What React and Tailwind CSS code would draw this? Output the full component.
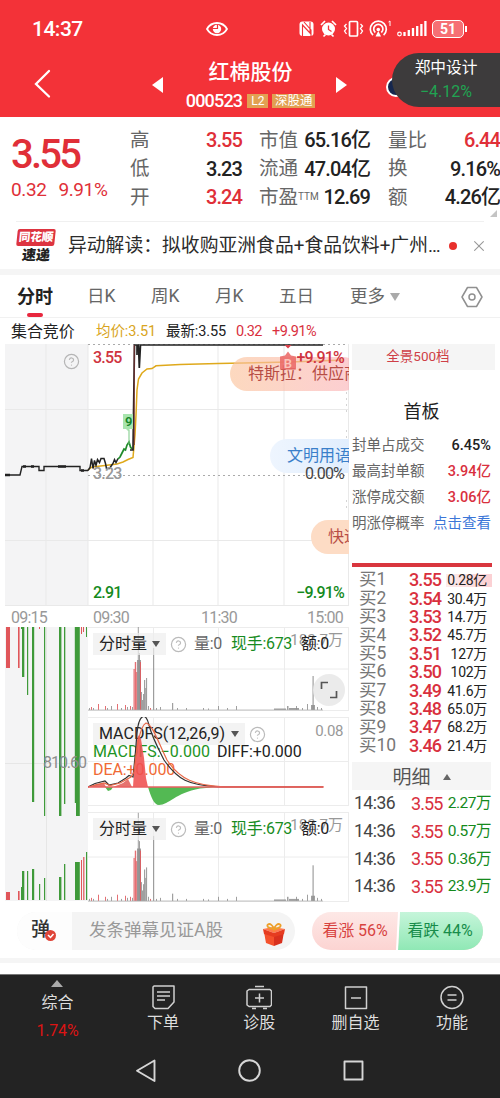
import { X, CircleHelp } from 'lucide-react'

const quotes = [
  [['高', '3.55', true], ['市值', '65.16亿'], ['量比', '6.44', true]],
  [['低', '3.23'], ['流通', '47.04亿'], ['换', '9.16%']],
  [['开', '3.24', true], ['市盈', '12.69', false, 'TTM'], ['额', '4.26亿']],
]

const bids = [
  ['3.55', '0.28亿'], ['3.54', '30.4万'], ['3.53', '14.7万'], ['3.52', '45.7万'], ['3.51', '127万'],
  ['3.50', '102万'], ['3.49', '41.6万'], ['3.48', '65.0万'], ['3.47', '68.2万'], ['3.46', '21.4万'],
]

const trades = ['2.27万', '0.57万', '0.36万', '23.9万']

const boardStats = [
  ['封单占成交', '6.45%', 'text-[#222] font-medium'],
  ['最高封单额', '3.94亿', 'text-[#d9303e] font-medium'],
  ['涨停成交额', '3.06亿', 'text-[#d9303e] font-medium'],
  ['明涨停概率', '点击查看', 'text-[#3b76d8]'],
]

const RED = '#e0565a'
const GREEN = '#3f9a3a'
const GRAY = '#8f8f8f'

// [x, width, height, colour]
const volumeBars = [
  [89, 1, 2, GRAY], [91, 1, 3, RED], [93, 1, 2, GRAY], [98, 1, 6, RED], [105, 1, 4, RED], [107, 1, 2, GRAY],
  [111, 1, 4, GRAY], [117, 1, 6, RED], [121, 1, 2, GRAY], [125, 1, 5, RED], [127, 1, 3, GRAY], [130, 1, 4, RED],
  [132, 1, 3, GRAY], [133.5, 1.2, 41, RED], [134.8, 1.4, 48, RED], [136.2, 1.2, 38, RED], [137, 4, 50, GRAY],
  [137.8, 1, 84, GRAY], [139, 1, 57, GRAY], [140, 1, 48, RED], [141, 1, 18, GRAY], [142, 1, 10, GRAY],
  [143, 1, 16, GRAY], [144, 1.2, 30, GRAY], [145.2, 1, 22, GRAY], [146, 1.1, 32, GRAY], [153, 1.2, 62, GRAY],
  [148, 1, 4, GRAY], [150, 1, 2, RED], [156, 1, 2, GRAY], [160, 1, 3, GRAY], [172, 1.2, 7, GRAY], [177, 1, 2, GRAY],
  [186, 1, 2, GRAY], [203, 1, 2, GRAY], [208, 1, 1.5, GRAY], [218, 1, 4, GRAY], [227, 1, 2, GRAY], [236, 1, 4, GRAY],
  [274, 12, 1.5, GRAY], [287, 1.5, 4, GRAY], [289, 10, 2, GRAY], [296, 1, 4, GRAY], [302, 1, 2, GRAY],
  [307, 1, 6, GRAY], [312.5, 1.2, 34, GRAY], [311, 4, 5, GRAY], [317, 1, 3, GRAY], [321, 1, 2, GRAY],
]

// [x, width, y end]
const auctionTop = [
  [6, 4, 668, RED], [18, 1.6, 668, RED], [21, 1.2, 629, GREEN], [22, 2.3, 677, GREEN], [27, 1.2, 695, GREEN],
  [32, 2.2, 802, GREEN], [39, 1, 629, RED], [44, 1.2, 816, GREEN], [59, 2.4, 816, GREEN], [64, 1.3, 804, GREEN],
  [74.8, 2, 803, GREEN], [76, 3.8, 816, GREEN], [81, 1, 634, RED], [83, 1, 632, RED], [86, 1, 637, GREEN],
]
const auctionBottom = [
  [6, 4, 892, RED], [18, 1.6, 891, RED], [21, 1, 887, GREEN], [22, 2.3, 871, GREEN], [27, 1.2, 871, GREEN],
  [32, 2.2, 869, GREEN], [39, 1.2, 884, GREEN], [44, 1.2, 878, GREEN], [59, 2.4, 877, GREEN], [64, 1.3, 864, GREEN],
  [75, 4.8, 862, GREEN], [81, 1, 860, RED], [83.2, 1.2, 857, RED], [86, 1.2, 852, GREEN],
]

function StatusBar() {
  return (
    <div className="flex h-[58px] items-center pl-8 pr-[33px] text-white">
      <span className="w-[174px] text-[21px] font-medium leading-none tracking-[-0.5px]">14:37</span>
      <svg className="h-4 w-[22px]" viewBox="0 0 22 16" fill="none" stroke="white" strokeWidth="1.8">
        <path d="M1 8C5.500 0 16.500 0 21 8C16.500 16 5.500 16 1 8Z" />
        <circle cx="11" cy="8" r="4.200" fill="white" stroke="none" />
        <path d="M11.500 3.500v4h-5" stroke="#f33238" strokeWidth="1.2" />
      </svg>
      <div className="ml-auto flex items-center">
        <svg className="h-[18px] w-[133px]" viewBox="298 20 133 18" fill="none" stroke="white" strokeWidth="1.7">
          <rect x="299.500" y="21.500" width="14" height="14.500" rx="3" fill="white" stroke="none" />
          <path d="M302.500 36V25l7.500 8V22M304 22l7 8v6" stroke="#f33238" strokeWidth="1.1" />
          <circle cx="328.500" cy="29" r="6.500" fill="white" stroke="none" />
          <path d="M321 25l4-4M336 25l-4-4M323.500 36.500l2-2M333.500 36.500l-2-2" />
          <path d="M328.500 25.500v4l3 2" stroke="#f33238" strokeWidth="1.300" />
          <rect x="349.500" y="21.500" width="8" height="14.500" rx="1" />
          <path d="M346.500 24l-2 2 2 2.500-2 2.500 2 3M360.500 24l2 2-2 2.500 2 2.500-2 3" strokeWidth="1.300" />
          <path d="M373 35.200a8 8 0 1 1 10.600 0" />
          <path d="M375.300 32.500a4.600 4.600 0 1 1 6 0" />
          <circle cx="378.300" cy="29.500" r="1.800" fill="white" stroke="none" />
          <path d="M375.500 36.500L378.300 31l2.800 5.500Z" fill="white" stroke="none" />
          <path d="M388.500 22l1.500-1v5" strokeWidth="1" />
          <circle cx="399.500" cy="34" r="1.800" strokeWidth="1.200" />
          <path d="M404.500 36v-4M408.800 36v-6M413 36v-8M417.200 36v-10M421.400 36v-12M425.400 36V21" strokeWidth="2.300" />
        </svg>
        <div className="ml-[1px] flex h-[18px] w-[32px] items-center justify-center rounded-[5px] border-[1.5px] border-white bg-white/30 text-[14px] font-bold leading-none">
          51
        </div>
        <div className="ml-[1px] h-1.5 w-[2px] bg-white" />
      </div>
    </div>
  )
}

function Header() {
  return (
    <div className="relative h-[117px] bg-[#f33238] text-white">
      <StatusBar />
      <div className="flex h-[59px] items-start">
        <svg className="ml-[33px] mt-[11px] h-[30px] w-[18px]" viewBox="0 0 18 30" fill="none" stroke="white" strokeWidth="2.300" strokeLinecap="round">
          <path d="M16 2L3 15L16 27.500" />
        </svg>
        <div className="ml-[101px] mt-[19px] h-0 w-0 border-y-[8px] border-r-[11px] border-y-transparent border-r-white" />
        <div className="ml-[22px] flex w-[131px] flex-col items-center pt-[4px]">
          <div className="text-[21px] font-medium leading-[20px]">红棉股份</div>
          <div className="mt-[11px] flex h-4 items-center gap-1 leading-none">
            <span className="mr-[1px] text-[18px] font-medium tracking-[-0.8px]">000523</span>
            <span className="flex h-[14px] w-[21px] items-center justify-center bg-[#e2a052] text-[12px]">L2</span>
            <span className="flex h-[14px] w-[43px] items-center justify-center whitespace-nowrap bg-[#e2a052] text-[12.500px]">深股通</span>
          </div>
        </div>
        <div className="ml-[20px] mt-[19px] h-0 w-0 border-y-[8px] border-l-[11px] border-y-transparent border-l-white" />
      </div>
      <div className="absolute left-[386px] top-[77px] h-5 w-5 rounded-full border-2 border-white bg-[#16274e]" />
      <div className="absolute right-0 top-[53px] flex h-[54px] w-[108px] flex-col items-center justify-center gap-2 rounded-l-full bg-[#3d3b3c] leading-none">
        <span className="text-[15.700px]">郑中设计</span>
        <span className="text-[16px] text-[#21a352]">−4.12%</span>
      </div>
    </div>
  )
}

function QuotePanel() {
  return (
    <div className="flex h-[104px] bg-white">
      <div className="w-[130px] pl-[11px] text-[#e02f38]">
        <div className="mt-[18px] text-[40px] font-medium leading-[40px] tracking-[-2.800px]">3.55</div>
        <div className="mt-[5px] flex gap-3 text-[19px] leading-[20px] tracking-[-0.400px]">
          <span>0.32</span><span>9.91%</span>
        </div>
      </div>
      <div className="relative mt-[9px] flex w-[370px] flex-col">
        {quotes.map((row, i) => (
          <div key={i} className="flex h-[28.500px] items-center text-[20px] leading-none">
            {row.map(([label, value, red, sup], j) => (
              <div key={label} className={`flex items-center justify-between ${j === 0 ? 'w-[112px]' : j === 1 ? 'ml-[17px] w-[111px]' : 'ml-[18px] w-[112px]'}`}>
                <span className="whitespace-nowrap text-[19.500px] text-[#666]">
                  {label}{sup && <span className="relative top-[-4px] text-[10px]">{sup}</span>}
                </span>
                <span className={`whitespace-nowrap font-medium tracking-[-0.900px] ${red ? 'text-[#e02f38]' : 'text-[#222]'}`}>{value}</span>
              </div>
            ))}
          </div>
        ))}
        <div className="absolute bottom-1 right-[3px] h-0 w-0 border-b-[7px] border-l-[7px] border-b-[#c4c4c4] border-l-transparent" />
      </div>
    </div>
  )
}

function NewsBar() {
  return (
    <div className="mx-4 flex h-[48px] items-center border-t border-[#f0f0f0] leading-none">
      <div className="flex w-[40px] flex-col items-center">
        <div className="relative flex h-[17px] w-[38px] -skew-x-6 items-center justify-center rounded-[2px] bg-[#dd3440] text-[11.500px] font-black text-white">
          同花顺
        </div>
        <div className="mt-[2px] -skew-x-6 text-[14px] font-black leading-[14px] text-[#222]">速递</div>
      </div>
      <span className="ml-3 whitespace-nowrap pt-[2px] text-[18.800px] tracking-[0.030px] text-[#2b2b2b]">异动解读：拟收购亚洲食品+食品饮料+广州…</span>
      <span className="ml-auto h-2 w-2 shrink-0 rounded-full bg-[#e8302c]" />
      <X className="ml-[14px] mr-[-3px] h-4 w-4 shrink-0 scale-110 text-[#999]" strokeWidth={1.5} />
    </div>
  )
}

function Tabs() {
  return (
    <div className="relative flex h-[43px] items-center border-b border-[#f1f1f1] pt-[2px] text-[17.500px] leading-none text-[#666]">
      <span className="ml-[17px] w-[70px] text-[18px] font-bold text-[#222]">分时</span>
      <span className="w-[64px]">日K</span>
      <span className="w-[64px]">周K</span>
      <span className="w-[64px]">月K</span>
      <span className="w-[71px]">五日</span>
      <span>更多</span>
      <span className="ml-[5px] h-0 w-0 border-x-[5px] border-t-[8px] border-x-transparent border-t-[#aaa]" />
      <svg className="ml-[61px] h-[22px] w-[22px]" viewBox="0 0 22 22" fill="none" stroke="#909090" strokeWidth="1.500">
        <path d="M6.500 1.500h9L21 11l-5.500 9.500h-9L1 11Z" strokeLinejoin="round" />
        <circle cx="11" cy="11" r="3" />
      </svg>
      <div className="absolute bottom-0 left-[27px] h-[4px] w-4 rounded-full bg-[#e8273e]" />
    </div>
  )
}

function Legend() {
  return (
    <div className="flex h-[26px] items-center pt-[2px] text-[14.500px] leading-none tracking-[-0.100px]">
      <span className="ml-[11px] w-[85px] text-[16px] text-[#222]">集合竞价</span>
      <span className="w-[70px] whitespace-nowrap text-[#d9a521]">均价:3.51</span>
      <span className="w-[70px] whitespace-nowrap text-[#222]">最新:3.55</span>
      <span className="w-[36px] tracking-[-0.600px] text-[#d9303e]">0.32</span>
      <span className="tracking-[-0.500px] text-[#d9303e]">+9.91%</span>
    </div>
  )
}

function PriceChart() {
  return (
    <div className="relative h-[262px] w-[349px] overflow-hidden">
      <svg className="block h-[262px] w-[349px]" viewBox="0 344 349 262" fill="none">
        <rect x="5" y="344" width="83" height="262" fill="#f4f4f5" />
        <path d="M46 344V606M88 344V606M153 344V606M218 344V606M284 344V606M348.500 344V606M5 409.500H349M5 540.500H349M5 605.500H349" stroke="#e9e9e9" />
        <path d="M88 344.500H347M88 475.500H347" stroke="#aaa" strokeDasharray="2 3" />
        <path d="M346.500 392v20M346.500 430v30M346.500 500v10" stroke="#d4d4d4" strokeDasharray="2 4" />
        <path d="M5 475H20L22 466.500H39V470.500H44V466.500H80V470.500H88" stroke="#222" strokeWidth="1.400" />
        <path d="M5 475h5M23 466.500h3M31 466.500h3M58 466.500h8M81 470.500h3" stroke="#222" strokeWidth="2.600" />
        <path d="M88 470L92 467 105 465.500 117 464 123 462 128 459.500 133 457.500 135 435 136 415 137 390 138.500 379 142 373 147 369 152 368.500 156 365.800 180 364.500 218 363.500 290 362 344 360" stroke="#dfa91c" strokeWidth="1.500" />
        <path d="M88 470.500l2-3 1.500-9 1.500 10 1.500-8 1.500 5 1.500-6 2 3 1.500-4h3l1.500 5 1 5h3l2-3 1.500-2 1.500-4 1.500 3 2-4" stroke="#222" strokeWidth="1.500" />
        <path d="M118 459l2-2 2-4 2-4 1.500 1 1.500-5 2-3 1.500 5 1.500 2" stroke="#208a2a" strokeWidth="1.700" />
        <path d="M130 450h3L134.500 345H137V355M137 345H138.500L139.300 368 140.500 345H323" stroke="#222" strokeWidth="1.700" />
        <path d="M134.200 345V445" stroke="#7d3434" strokeWidth="1" />
        <path d="M123 414h10v15h-3l-2 2-2-2h-3Z" fill="#a8e5ae" />
        <path d="M129 430v14" stroke="#79c883" strokeWidth="1" />
        <text x="125" y="426" fontSize="13" fontWeight="600" fill="#16862a">9</text>
      </svg>
      <CircleHelp className="absolute left-[63px] top-[9px] h-[17px] w-[17px] text-[#b5b5b5]" strokeWidth={1.700} />
      <div className="absolute left-[230px] top-[13px] flex h-[34px] w-[130px] items-center whitespace-nowrap rounded-full bg-linear-to-r from-[#fbc49c]/65 to-[#fbb3bb]/65 pl-[18px] text-[16px] text-[#b74c44]">特斯拉：供应商</div>
      <div className="absolute left-[270px] top-[95px] flex h-[34px] w-[110px] items-center whitespace-nowrap rounded-full bg-linear-to-r from-[#eef5fe] to-[#dcebfd] pl-[17px] text-[16px] text-[#3a7fca]">文明用语</div>
      <div className="absolute left-[311px] top-[176px] flex h-[34px] w-[110px] items-center whitespace-nowrap rounded-full bg-[#fddcc5] pl-[17px] text-[16px] text-[#b74c44]">快速</div>
      <svg className="absolute left-[278px] top-0 h-[30px] w-[20px]" viewBox="278 344 20 30" fill="none">
        <path d="M284.500 345h7l-3.500 3.500Z" fill="#d9404a" />
        <path d="M280 356.500l5-1 3-4 3 4 5 1v13h-16Z" fill="#ea6a68" fillOpacity=".88" />
        <text x="283.700" y="367.500" fontSize="13" fontWeight="600" fill="#fbc5bc">B</text>
      </svg>
      <div className="absolute inset-y-0 left-[93px] right-[5px] text-[16px] font-medium leading-none tracking-[-0.800px]">
        <div className="absolute inset-x-0 top-[6px] flex justify-between text-[#cf3340]"><span>3.55</span><span>+9.91%</span></div>
        <div className="absolute inset-x-0 top-[122px] flex justify-between text-[#444]"><span className="text-[#999]">3.23</span><span className="font-normal">0.00%</span></div>
        <div className="absolute inset-x-0 bottom-[5px] flex justify-between text-[#148a1c]"><span>2.91</span><span>−9.91%</span></div>
      </div>
    </div>
  )
}

function TimeAxis() {
  return (
    <div className="flex h-[21px] items-center pl-[11px] pt-[2px] text-[16px] leading-none tracking-[-0.800px] text-[#999]">
      <span className="w-[82px]">09:15</span>
      <span className="w-[108px]">09:30</span>
      <span className="w-[106px]">11:30</span>
      <span>15:00</span>
    </div>
  )
}

function AuctionVolume() {
  return (
    <svg className="block h-[275px] w-[88px]" viewBox="0 627 88 275">
      <rect x="5" y="627" width="83" height="274" fill="#f4f4f5" />
      <path d="M5 763.500H88M46.500 627V901" stroke="#e6e6e6" />
      {auctionTop.map(([x, w, y, c], i) => <rect key={i} x={x} y="627" width={w} height={y - 627} fill={c} />)}
      {auctionBottom.map(([x, w, y, c], i) => <rect key={i} x={x} y={y} width={w} height={900 - y} fill={c} />)}
      <text x="43" y="768" fontSize="16" fill="#8c8c8c" textLength="44">810.60</text>
    </svg>
  )
}

function IndicatorName({ children, width }) {
  return (
    <>
      <span className={`flex h-[22px] items-center justify-between bg-[#eeeeee]/70 pl-[6px] pr-[6px] text-[16px] text-[#222] ${width}`}>
        {children}
        <span className="h-0 w-0 border-x-[4.500px] border-t-[6px] border-x-transparent border-t-[#555]" />
      </span>
      <CircleHelp className="ml-1 h-[17px] w-[17px] text-[#bbb]" strokeWidth={1.700} />
    </>
  )
}

function VolumePanel({ tall }) {
  const h = tall ? 90 : 84
  return (
    <div className={tall ? 'relative h-[90px]' : 'relative h-[84px]'}>
      <svg className="block h-full w-[261px]" viewBox={`88 0 261 ${h}`}>
        <path d={`M88 .5H349M88 ${h / 2}H349M88 ${h - 0.500}H349M153.500 0V${h}M218.500 0V${h}M284.500 0V${h}M348.500 0V${h}`} stroke="#ececec" />
        {volumeBars.map(([x, w, b, c], i) => (
          <rect key={i} x={x} y={h - 1 - b * (tall ? 1.050 : 1)} width={w} height={b * (tall ? 1.050 : 1)} fill={c} fillOpacity=".85" />
        ))}
        <path d={`M88 ${h - 1}H323`} stroke="#aaa" strokeWidth=".7" />
      </svg>
      <span className="absolute right-[6px] top-[6px] text-[15px] leading-none text-[#999]">182.7万</span>
      <div className="absolute left-[5px] top-[6px] flex items-center whitespace-nowrap text-[16px] leading-none">
        <IndicatorName width="w-[73px]">分时量</IndicatorName>
        <span className="ml-[7px] w-[37px] tracking-[-0.300px] text-[#666]">量:0</span>
        <span className="w-[70px] tracking-[-0.300px] text-[#178c1e]">现手:673</span>
        <span className="tracking-[-0.300px] text-[#222]">额:0</span>
      </div>
      {!tall && (
        <div className="absolute right-[4px] top-[47px] flex h-8 w-8 items-center justify-center rounded-full bg-[#e9e9e9]/90">
          <svg className="h-[18px] w-[18px]" viewBox="0 0 18 18" fill="none" stroke="#555" strokeWidth="1.700">
            <path d="M1.500 8V1.500H8M16.500 10v6.500H10" />
          </svg>
        </div>
      )}
    </div>
  )
}

function MacdPanel() {
  return (
    <div className="relative my-[6px] h-[89px]">
      <svg className="block h-[89px] w-[261px]" viewBox="88 717 261 89" fill="none">
        <path d="M88 717.500H349M88 761.500H349M88 805.500H349M153.500 717V806M218.500 717V806M284.500 717V806M348.500 717V806" stroke="#ececec" />
      </svg>
      <div className="absolute left-[5px] top-[6px] flex items-center whitespace-nowrap leading-none">
        <IndicatorName width="w-[152px]">MACDFS(12,26,9)</IndicatorName>
      </div>
      <div className="absolute left-[5px] top-[26px] text-[16px] leading-[18px]">
        <div className="flex gap-[7px]"><span className="text-[#1e9424]">MACDFS:−0.000</span><span className="tracking-[-0.100px] text-[#222]">DIFF:+0.000</span></div>
        <div className="tracking-[-0.100px] text-[#f06a34]">DEA:+0.000</div>
      </div>
      <svg className="absolute left-0 top-0 h-[89px] w-[261px]" viewBox="88 717 261 89" fill="none">
        <path d="M133 787L134 771 136 746 138 735 141 739 144 758 146 778 148 787Z" fill="#ef5050" fillOpacity=".88" />
        <path d="M90 787l6-3 8-1 2 4ZM113 787l10-4 5-4 4 8Z" fill="#e6736e" />
        <path d="M105 787l3 4 3-1 2-3ZM148 787C151 797 154 805 159 805C169 805 175 793 200 788.500L218 787Z" fill="#53b953" />
        <path d="M88 787L95 783.500 105 781 109 785 118 783 126 778 129 775.500 133 777 135 757 137 733C139 713 146 712 149 725C152 737 158 748 164 760C178 780 188 785 218 786.800H323" stroke="#333" strokeWidth="1.200" />
        <path d="M88 787L104 783 110 785.500 120 783 131 777 134 772C136 755 139 726 146 723C153 725 158 742 167 760C180 780 195 785 223 786.800H323.500" stroke="#e86848" strokeWidth="1.200" />
        <path d="M88 787H323.500" stroke="#e86060" strokeWidth="1.500" />
      </svg>
      <span className="absolute right-[6px] top-[7px] text-[15px] leading-none tracking-[-0.400px] text-[#999]">0.08</span>
    </div>
  )
}

function OrderBook() {
  return (
    <div className="ml-[3px] w-[143px] leading-none">
      <div className="flex h-[26px] items-center justify-center bg-[#f5f5f5] pr-[11px] text-[13.500px] text-[#cf3f47]">全景500档</div>
      <div className="mt-[32px] flex h-[20px] items-center justify-center pr-[4px] text-[18px] text-[#222]">首板</div>
      <div className="mt-[11px] w-[139px]">
        {boardStats.map(([label, value, tone]) => (
          <div key={label} className="flex h-[26px] items-center justify-between whitespace-nowrap text-[14.500px]">
            <span className="text-[#666]">{label}</span>
            <span className={tone}>{value}</span>
          </div>
        ))}
      </div>
      <div className="mt-[26px] h-[4px] w-[140px] bg-[#d9363e]" />
      <div className="mt-[4px] w-[140px]">
        {bids.map(([price, vol], i) => (
          <div key={price} className="flex h-[18.400px] items-center whitespace-nowrap pl-[7px]">
            <span className="w-[50px] text-[17.500px] text-[#777]">买{i + 1}</span>
            <span className="w-[37px] text-[18px] font-medium tracking-[-0.900px] text-[#d9303e]">{price}</span>
            <span className={`flex h-[13px] w-[46px] items-center justify-end pr-[5px] text-[14px] tracking-[-0.300px] text-[#222] ${i === 0 ? 'bg-linear-to-r from-[#fdebeb] to-[#fbd0d3]' : ''}`}>{vol}</span>
          </div>
        ))}
      </div>
      <div className="mt-[7px] flex h-[28px] w-[139px] items-center justify-center gap-3 bg-[#f5f5f5] pt-[3px] text-[19px] text-[#555]">
        明细
        <span className="h-0 w-0 border-x-[4px] border-b-[6px] border-x-transparent border-b-[#666]" />
      </div>
      {trades.map((vol) => (
        <div key={vol} className="flex h-[27.800px] w-[139px] items-center whitespace-nowrap">
          <span className="w-[59px] pl-[2px] text-[17.500px] tracking-[-0.500px] text-[#444]">14:36</span>
          <span className="text-[18px] tracking-[-0.900px] text-[#d9303e]">3.55</span>
          <span className="ml-auto text-[15.500px] tracking-[-0.500px] text-[#148a1c]">{vol}</span>
        </div>
      ))}
    </div>
  )
}

function Gift() {
  return (
    <svg className="h-6 w-6" viewBox="0 0 24 24">
      <path d="M2 9l10 3v11L4 20Z" fill="#f4512c" />
      <path d="M12 12l10-3-2 11-8 3Z" fill="#d9301d" />
      <path d="M1 6l10-2 12 2-11 4Z" fill="#ff7a4c" />
      <path d="M1 6l11 4v4L2 11ZM12 10l11-4-1 5-10 3Z" fill="#e63c20" />
      <path d="M12 6C7 6 4 3 6 1.500s5 1 6 4.500c1-3.500 4-6 6-4.500s-1 4.500-6 4.500Z" fill="none" stroke="#eda02a" strokeWidth="1.800" />
    </svg>
  )
}

function DanmakuBar() {
  return (
    <div className="flex h-[53px] items-center pb-[2px] pl-[17px] leading-none">
      <div className="flex h-[38px] w-[278px] items-center overflow-hidden rounded-full bg-[#f4f4f4]">
        <div className="relative h-full w-[55px] bg-[#fdfdfd] pl-[14px] pt-[8px] text-[19px] font-medium text-[#333]">
          弹
          <svg className="absolute left-[28px] top-[18px] h-[11px] w-[11px]" viewBox="0 0 11 11">
            <circle cx="5.500" cy="5.500" r="5.500" fill="#df4438" />
            <path d="M3 5l2.500 2.500L8.500 4" fill="none" stroke="white" strokeWidth="1.500" />
          </svg>
        </div>
        <span className="ml-[17px] pt-[1px] text-[17.500px] text-[#999]">发条弹幕见证A股</span>
        <span className="ml-auto mr-[9px] mt-2"><Gift /></span>
      </div>
      <div className="relative ml-[17px] flex h-[38px] w-[171px] overflow-hidden rounded-full bg-linear-to-b from-[#fde8e6] to-[#fcd4d2] pt-[1px] text-[16px] tracking-[-0.100px]">
        <div className="absolute inset-y-0 right-[-10px] w-[96px] -skew-x-3 border-l-2 border-white bg-linear-to-b from-[#c5f5da] to-[#8fe8b5]" />
        <span className="relative flex w-[84px] items-center justify-center whitespace-nowrap pl-[2px] text-[#d8433f]">看涨 56%</span>
        <span className="relative flex flex-1 items-center justify-center whitespace-nowrap pl-[1px] text-[#178c4a]">看跌 44%</span>
      </div>
    </div>
  )
}

const tools = [
  ['下单', <path key="a" d="M4 2H24V18L18 24.500H5L3 22.500V3ZM7 8H20M7 12H20M7 16H15" />],
  ['诊股', <path key="b" d="M3 5.500H24L25.500 7V21L24 22.500H3L1 21V7ZM9 2.500H18M6 24.500h4M17 24.500h4M9 14H18M13.500 9.500V18.500" />],
  ['删自选', <path key="c" d="M2.500 3H23.500V24.500H2.500ZM8 14H18" />],
  ['功能', <path key="d" d="M13 2.500A11 11 0 1 1 13 24.500A11 11 0 1 1 13 2.500M8.500 11H17.500M8.500 16H17.500" />],
]

function BottomNav() {
  return (
    <div className="h-[124px] bg-[#232323] text-[#dedede]">
      <div className="flex h-[76px] border-t border-[#777] text-[16px] leading-none">
        <div className="flex w-[115px] flex-col items-center pt-[5px]">
          <span className="h-0 w-0 border-x-[6px] border-b-[7px] border-x-transparent border-b-[#aaa]" />
          <span className="mt-[8px]">综合</span>
          <span className="mt-[12px] text-[16px] tracking-[-0.200px] text-[#dc1414]">1.74%</span>
        </div>
        {tools.map(([label, icon]) => (
          <div key={label} className="flex w-[96.300px] flex-col items-center pt-[9px]">
            <svg className="h-[26px] w-[26px]" viewBox="0 0 26 26" fill="none" stroke="#d0d0d0" strokeWidth="1.500" strokeLinejoin="round">{icon}</svg>
            <span className="mt-[5px]">{label}</span>
          </div>
        ))}
      </div>
      <div className="flex justify-center pt-[8px]">
        <svg className="h-6 w-[230px]" viewBox="135 1058 230 24" fill="none" stroke="#d6d6d6" strokeWidth="1.900" strokeLinejoin="round">
          <path d="M154.500 1060.500V1081L137 1070.700Z" />
          <circle cx="249.500" cy="1070.500" r="10.300" />
          <rect x="344.500" y="1061.500" width="18" height="18" />
        </svg>
      </div>
    </div>
  )
}

export default function App() {
  return (
    <div className="h-[1098px] w-[500px] overflow-hidden bg-white font-['Roboto','Noto_Sans_CJK_SC',sans-serif]">
      <Header />
      <QuotePanel />
      <NewsBar />
      <div className="h-[6px] bg-[#f5f5f5]" />
      <Tabs />
      <Legend />
      <div className="flex h-[561px]">
        <div className="w-[349px]">
          <PriceChart />
          <TimeAxis />
          <div className="flex">
            <AuctionVolume />
            <div className="w-[261px]">
              <VolumePanel />
              <MacdPanel />
              <VolumePanel tall />
            </div>
          </div>
        </div>
        <OrderBook />
      </div>
      <DanmakuBar />
      <div className="mb-[11px] h-[5px] bg-[#f5f5f5]" />
      <BottomNav />
    </div>
  )
}
